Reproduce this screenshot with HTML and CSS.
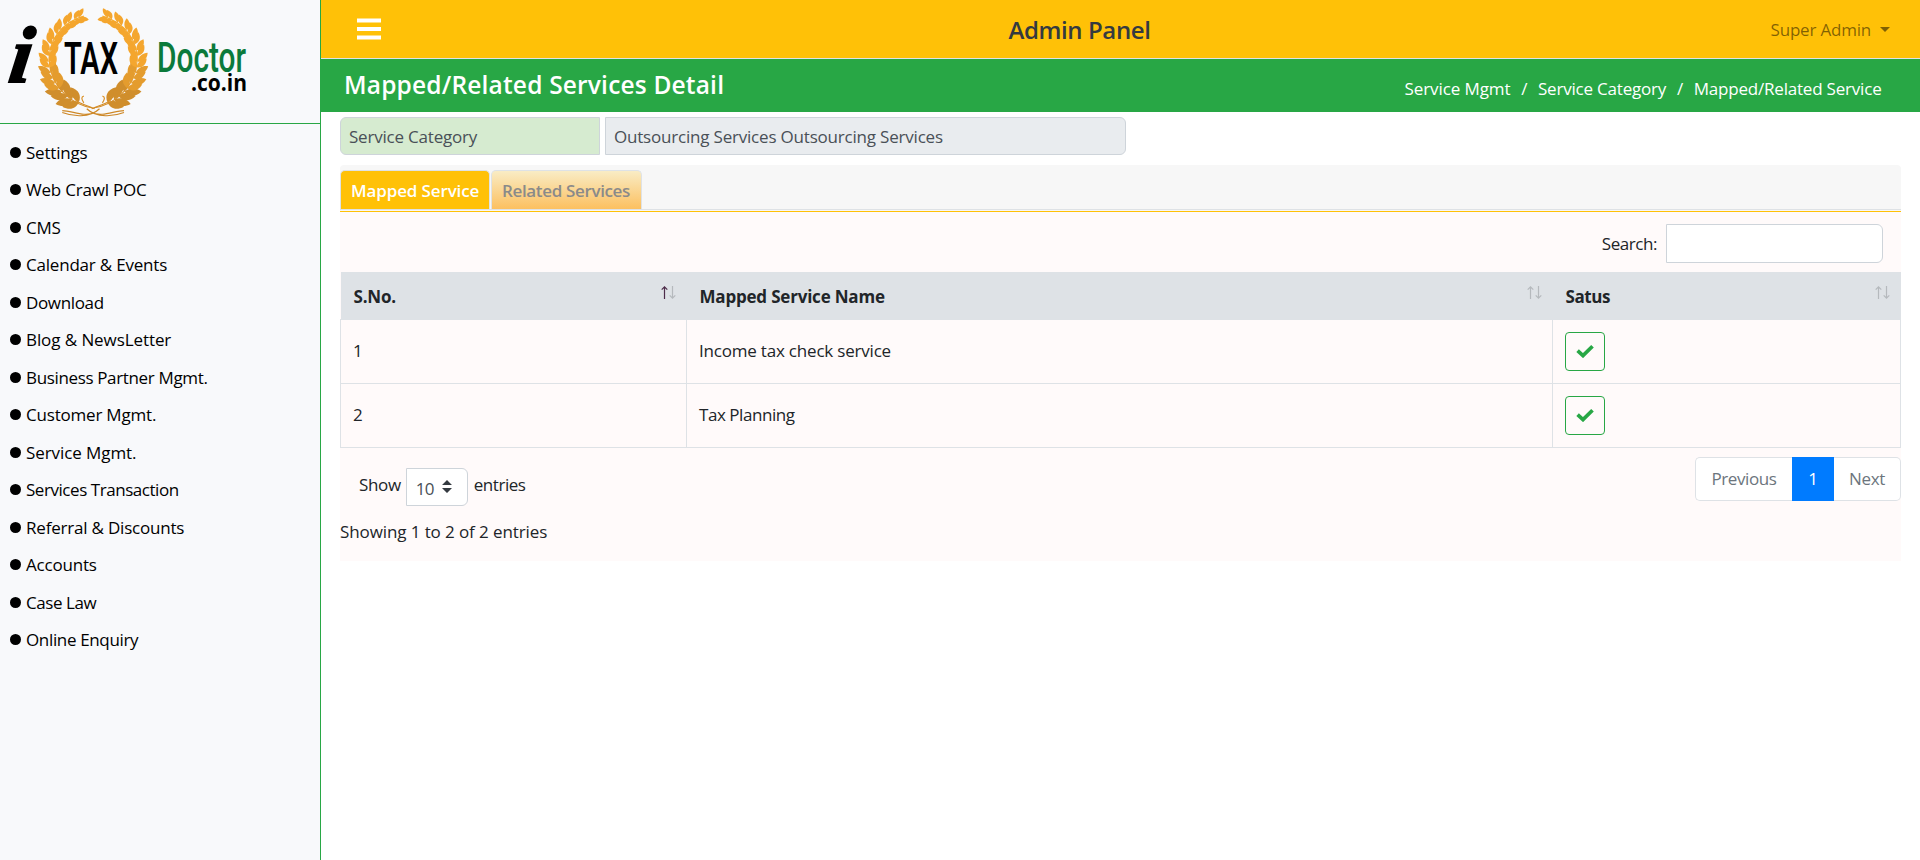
FILE: index.html
```html
<!DOCTYPE html>
<html lang="en">
<head>
<meta charset="utf-8">
<title>Admin Panel</title>
<link rel="stylesheet" href="styles.css">
</head>
<body>
<svg width="0" height="0" class="defs" aria-hidden="true">
  <defs>
    <linearGradient id="gold" gradientUnits="userSpaceOnUse" x1="0" y1="5" x2="0" y2="118">
      <stop offset="0" stop-color="#f7b02f"/><stop offset=".55" stop-color="#f2a32c"/><stop offset="1" stop-color="#c98425"/>
    </linearGradient>
    <g id="pair">
      <path d="M0 0C-6 0 -10.500 -4 -9.500 -12C-4 -11 0 -6 0 0Z"/>
      <path d="M0 0C6 0 10.500 -4 9.500 -12C4 -11 0 -6 0 0Z"/>
    </g>
    <g id="sprig"><use href="#pair"/><use href="#pair" y="-6.500"/></g>
    <g id="branch">
      <path class="stem" d="M92 107C75 104 53 90 49 62C46 38 62 18 84 12"/>
      <g fill="#d08e2c">
        <use href="#sprig" transform="translate(79 101) rotate(-68) scale(1.150)"/>
        <use href="#sprig" transform="translate(67.700 94.700) rotate(-52) scale(1.150)"/>
      </g>
      <g fill="#e49c2e">
        <use href="#sprig" transform="translate(59 86.600) rotate(-38) scale(1.050)"/>
        <use href="#sprig" transform="translate(52.700 76.500) rotate(-24) scale(.95)"/>
      </g>
      <g fill="#f4a62e">
        <use href="#sprig" transform="translate(49.200 65) rotate(-10) scale(.9)"/>
        <use href="#sprig" transform="translate(48.700 53) rotate(6) scale(.88)"/>
        <use href="#sprig" transform="translate(51.200 41.300) rotate(21) scale(.85)"/>
        <use href="#sprig" transform="translate(56.600 30.600) rotate(36) scale(.8)"/>
        <use href="#sprig" transform="translate(64.600 21.800) rotate(51) scale(.76)"/>
        <use href="#sprig" transform="translate(74.500 15.300) rotate(65) scale(.7)"/>
      </g>
      <path class="stem" d="M95 108C84 103 78 103 75 98M95 112C84 117 72 110 62 110M100 108C90 118 72 116 62 112M84 102Q80 96 84 95"/>
    </g>
    <symbol id="check" viewBox="0 0 18 14"><path d="M1.600 6.600L7 11.600L16.500 2.200" fill="none" stroke="#28a745" stroke-width="3.700"/></symbol>
    <symbol id="sort" viewBox="0 0 15 13">
      <path class="up" d="M3.500 13V1M.7 3.700L3.500 .9L6.300 3.700"/>
      <path class="down" d="M11.500 0V12M8.700 9.300L11.500 12.100L14.300 9.300"/>
    </symbol>
  </defs>
</svg>

<div class="layout">
  <aside class="sidebar">
    <div class="brand">
      <svg class="logo" viewBox="0 0 260 123" role="img" aria-label="iTax Doctor">
        <g transform="translate(1.500 4.500) scale(.98 .965)"><use href="#branch"/><use href="#branch" transform="translate(187 0) scale(-1 1)"/></g>
        <text class="logo-i" transform="translate(7 82) skewX(-8)">i</text>
        <text class="logo-tax" x="64" y="74" textLength="54" lengthAdjust="spacingAndGlyphs">TAX</text>
        <text class="logo-doctor" x="157" y="72" textLength="89" lengthAdjust="spacingAndGlyphs">Doctor</text>
        <text class="logo-co" x="191" y="91" textLength="56" lengthAdjust="spacingAndGlyphs">.co.in</text>
      </svg>
    </div>
    <ul class="menu">
      <li>Settings</li>
      <li>Web Crawl POC</li>
      <li>CMS</li>
      <li>Calendar &amp; Events</li>
      <li class="snug">Download</li>
      <li class="loose">Blog &amp; NewsLetter</li>
      <li class="snug">Business Partner Mgmt.</li>
      <li>Customer Mgmt.</li>
      <li class="loose">Service Mgmt.</li>
      <li class="tight">Services Transaction</li>
      <li>Referral &amp; Discounts</li>
      <li>Accounts</li>
      <li class="tight">Case Law</li>
      <li class="snug">Online Enquiry</li>
    </ul>
  </aside>

  <main class="main">
    <header class="topbar">
      <svg class="burger" viewBox="0 0 24 22"><path d="M0 .5h24v4H0zM0 9h24v4H0zM0 17.500h24v4H0z" fill="#fff"/></svg>
      <h1 class="panel-title">Admin Panel</h1>
      <div class="user">Super Admin<span class="caret"></span></div>
    </header>

    <div class="titlebar">
      <h2 class="page-title">Mapped/Related Services Detail</h2>
      <nav class="crumbs"><span class="loose">Service Mgmt</span><i>/</i><span>Service Category</span><i>/</i><span>Mapped/Related Service</span></nav>
    </div>

    <section class="content">
      <div class="filter">
        <div class="field field-label">Service Category</div>
        <div class="field field-value">Outsourcing Services Outsourcing Services</div>
      </div>

      <div class="card">
        <div class="tabs">
          <div class="tab active">Mapped Service</div>
          <div class="tab snug">Related Services</div>
        </div>
        <div class="card-body">
          <div class="search"><span class="tight">Search:</span><input class="search-box" type="text"></div>
          <table class="grid">
            <thead>
              <tr>
                <th class="c1"><div class="th"><span>S.No.</span><svg class="sort asc"><use href="#sort"/></svg></div></th>
                <th class="c2"><div class="th"><span>Mapped Service Name</span><svg class="sort"><use href="#sort"/></svg></div></th>
                <th class="c3"><div class="th"><span class="tight">Satus</span><svg class="sort"><use href="#sort"/></svg></div></th>
              </tr>
            </thead>
            <tbody>
              <tr><td>1</td><td>Income tax check service</td><td><span class="btn"><svg class="check"><use href="#check"/></svg></span></td></tr>
              <tr><td>2</td><td class="tight">Tax Planning</td><td><span class="btn"><svg class="check"><use href="#check"/></svg></span></td></tr>
            </tbody>
          </table>
          <div class="table-foot">
            <div>
              <div class="length">
                <span class="snug">Show</span>
                <span class="select"><span>10</span><svg class="updown" viewBox="0 0 10 13"><path d="M0 5L5 0L10 5ZM0 8L5 13L10 8Z" fill="#343a40"/></svg></span>
                <span class="tight">entries</span>
              </div>
              <div class="info">Showing 1 to 2 of 2 entries</div>
            </div>
            <div class="pager"><span class="page prev">Previous</span><span class="page current">1</span><span class="page next">Next</span></div>
          </div>
        </div>
      </div>
    </section>
  </main>
</div>
</body>
</html>
```
FILE: styles.css
```css
* { box-sizing: border-box; }
body {
  margin: 0;
  background: #fff;
  color: #212529;
  font: 400 17px/25.5px "Open Sans", "Noto Sans", sans-serif;
  letter-spacing: -.2px;
}
.defs { position: absolute; }
.loose { letter-spacing: -.08px; }
.snug { letter-spacing: -.35px; }
.tight { letter-spacing: -.45px; }

.layout { display: flex; height: 860px; }

/* Sidebar */
.sidebar { width: 321px; flex: none; background: #f8f9fb; border-right: 1px solid #28a745; }
.brand { height: 124px; border-bottom: 1px solid #28a745; }
.logo { display: block; width: 260px; height: 123px; }
.stem { fill: none; stroke: url(#gold); stroke-width: 1.200; }
.logo-i { font: italic 700 80px "Liberation Serif", serif; stroke: #000; stroke-width: 2; }
.logo-tax { font: 600 45px Roboto, sans-serif; letter-spacing: 0; }
.logo-doctor { font: 500 42px/1 Roboto, sans-serif; letter-spacing: 0; fill: #0b7a3b; }
.logo-co { font: 700 23px/1 "Open Sans", sans-serif; letter-spacing: 0; }
.menu { list-style: none; margin: 0; padding: 10px 0 0 10px; color: #000; }
.menu li { display: flex; align-items: center; gap: 5px; height: 37.49px; }
.menu li::before { content: ""; width: 11px; height: 11px; border-radius: 50%; background: #000; margin-bottom: 1px; }

/* Top bars */
.main { flex: 1; min-width: 0; }
.topbar {
  display: grid; grid-template-columns: 1fr auto 1fr; align-items: center;
  height: 59px; padding: 0 30px 0 36px; background: #ffc107; border-bottom: 1px solid #dee2e6;
}
.burger { width: 24px; height: 22px; }
.panel-title { margin: 1px 0 0 -88px; font-size: 24px; font-weight: 600; line-height: 30px; color: #343a40; letter-spacing: -.4px; }
.user { justify-self: end; display: flex; align-items: center; gap: 9px; margin-top: 1px; color: rgba(0, 0, 0, .5); }
.caret { border: 5.500px solid transparent; border-top-color: currentColor; border-bottom: 0; }
.titlebar {
  display: flex; justify-content: space-between; height: 53px; padding: 0 38.500px 0 23px;
  background: #28a745; color: #fff;
}
.page-title { margin: 8px 0 0; font-size: 24.500px; font-weight: 600; line-height: 36px; letter-spacing: .18px; }
.crumbs { display: flex; margin-top: 17px; }
.crumbs i { font-style: normal; width: 27.500px; text-align: center; }

/* Content */
.content { padding: 5px 19px 0; }
.filter { display: flex; gap: 5px; color: #495057; }
.field { height: 38px; padding: 6px 8px; border: 1px solid #ced4da; }
.field-label { width: 260px; background: #d6ebd0; border-radius: 6px 0 0 6px; }
.field-value { width: 521px; background: #e9ecef; border-radius: 0 6px 6px 0; }

.card { margin-top: 10px; border-radius: 4px 4px 0 0; overflow: hidden; background: #f7f7f7; height: 396px; }
.tabs { display: flex; align-items: flex-end; gap: 1px; height: 45px; padding-top: 5px; border-bottom: 1px solid #dee2e6; }
.tab {
  height: 39px; width: 151px; padding: 7px 10px; font-weight: 600; white-space: nowrap;
  border: 1px solid #dee2e6; border-bottom: 0; border-radius: 5px 5px 0 0;
  color: #8a8a8a; background: linear-gradient(#f9ecc5, #fcc060);
}
.tab.active { width: 150px; color: #fff; background: #ffc107; letter-spacing: -.13px; }
.card-body { height: 350px; margin-top: 1px; border-top: 1px solid #ffc107; background: #fffafa; }
.search { display: flex; justify-content: flex-end; align-items: center; gap: 9px; height: 60px; padding: 3px 18px 0 0; }
.search-box { width: 217px; height: 39px; padding: 0; border: 1px solid #ced4da; border-radius: 0 6px 6px 0; background: #fff; }

/* Table */
.grid { width: 100%; table-layout: fixed; border-collapse: collapse; }
.grid th { height: 47px; padding: 0 11px 0 13px; background: #dee2e6; text-align: left; font-weight: 700; }
.grid td { height: 64px; padding: 0 12px; border: 1px solid #dee2e6; }
.c1 { width: 346px; }
.c2 { width: 866px; }
.th { display: flex; justify-content: space-between; align-items: center; padding-top: 2px; }
.sort { width: 15px; height: 13px; margin-bottom: 8px; fill: none; stroke: #b5b9bd; stroke-width: 1.200; }
.sort.asc { --up: #4d2c4a; }
.up { stroke: var(--up, #b5b9bd); }
.btn { display: flex; align-items: center; justify-content: center; width: 40px; height: 39px; border: 1px solid #28a745; border-radius: 4px; }
.check { width: 18px; height: 14px; }

.table-foot { display: flex; justify-content: space-between; padding-top: 9px; }
.length { display: flex; align-items: center; padding: 11px 0 0 19px; }
.length > .snug, .length > .tight { margin-bottom: 3px; }
.select {
  display: flex; align-items: center; gap: 8px; width: 62px; height: 38px; margin: 0 6px 0 5px; padding-left: 9px;
  border: 1px solid #ced4da; border-radius: 0 6px 6px 0; background: #fff; color: #495057;
}
.select span { padding-top: 4px; letter-spacing: -.7px; }
.updown { width: 10px; height: 13px; }
.info { margin-top: 13px; letter-spacing: -.1px; }
.pager { display: flex; height: 44px; color: #6c757d; }
.page { display: flex; align-items: center; justify-content: center; border: 1px solid #dee2e6; background: #fff; }
.prev { width: 97px; border-radius: 5px 0 0 5px; border-right: 0; letter-spacing: -.4px; }
.current { width: 42px; background: #007bff; border-color: #007bff; color: #fff; }
.next { width: 67px; border-radius: 0 5px 5px 0; border-left: 0; letter-spacing: -.35px; }
```
